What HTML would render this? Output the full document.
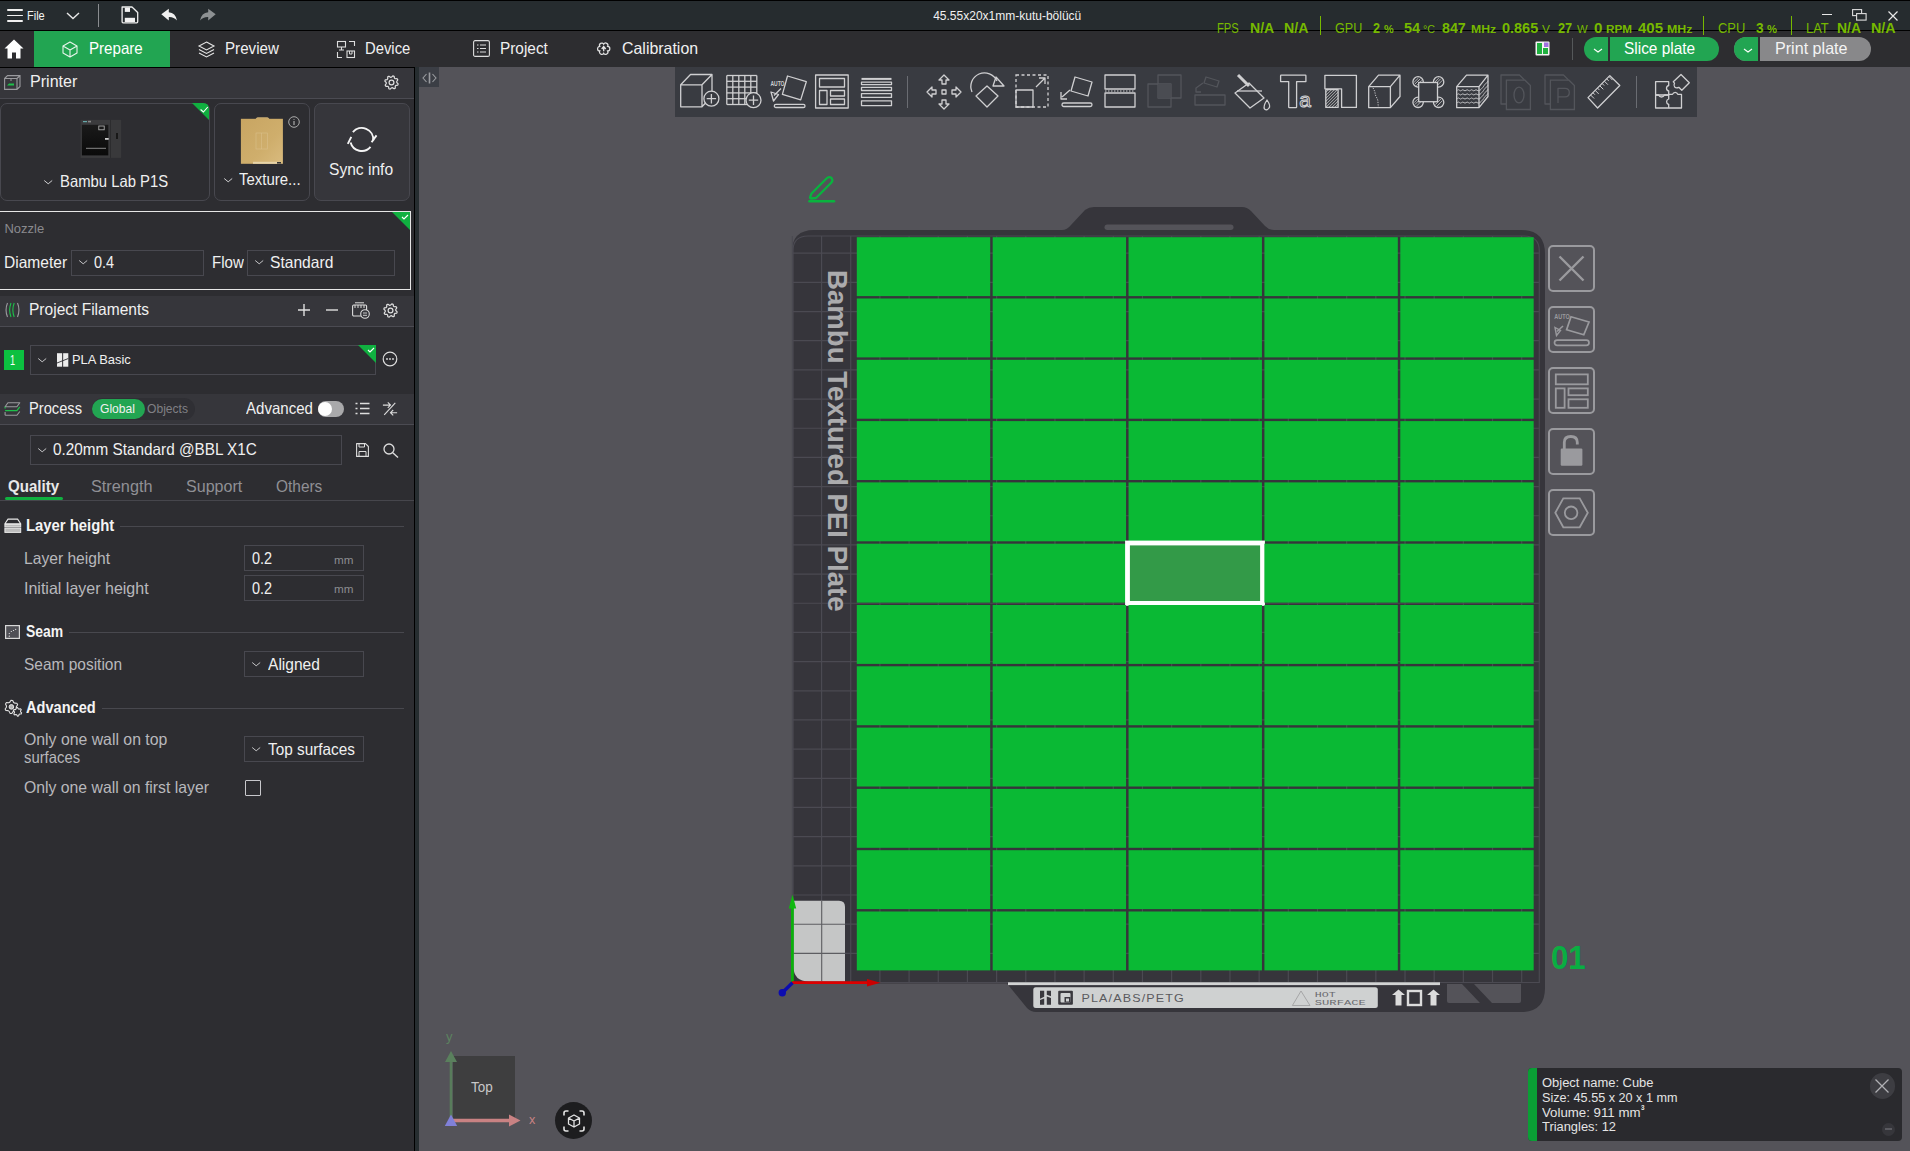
<!DOCTYPE html><html><head><meta charset="utf-8"><style>
html,body{margin:0;padding:0}
body{width:1910px;height:1151px;position:relative;overflow:hidden;background:#545359;font-family:"Liberation Sans",sans-serif}
.a{position:absolute}
.t{white-space:nowrap;transform-origin:0 0}
svg{overflow:visible}
</style></head><body>
<div class="a" style="left:0px;top:0px;width:1910px;height:1px;background:#000"></div>
<div class="a" style="left:0px;top:1px;width:1910px;height:29px;background:#262c2f"></div>
<div class="a" style="left:0px;top:30px;width:1910px;height:1px;background:#000"></div>
<div class="a" style="left:7px;top:9px;width:16px;height:1.6px;background:#f0f0f0;border-radius:1px"></div>
<div class="a" style="left:7px;top:14.5px;width:16px;height:1.6px;background:#f0f0f0;border-radius:1px"></div>
<div class="a" style="left:7px;top:20px;width:16px;height:1.6px;background:#f0f0f0;border-radius:1px"></div>
<div class="a t" style="left:26.70px;top:9.09px;font-size:13px;line-height:13px;color:#f4f4f4;font-weight:400;transform:scaleX(0.8457);">File</div>
<svg class="a" style="left:66px;top:12px;" width="14" height="8" viewBox="0 0 14 8"><path d="M1 1 L7 6.5 L13 1" stroke="#e8e8e8" stroke-width="1.4" fill="none"/></svg>
<div class="a" style="left:98px;top:4px;width:1.2px;height:23px;background:#8a8d90"></div>
<svg class="a" style="left:121px;top:6px;" width="18" height="18" viewBox="0 0 18 18"><path d="M1.1 1 H11 L16.7 6.5 V15.8 Q16.7 16.8 15.7 16.8 H2.1 Q1.1 16.8 1.1 15.8 Z" stroke="#eee" stroke-width="1.3" fill="none" stroke-linejoin="round"/><rect x="3.8" y="1.6" width="5.2" height="4.3" fill="#f2f2f2"/><rect x="3.8" y="11.8" width="10.2" height="4.2" fill="#f2f2f2"/></svg>
<svg class="a" style="left:160px;top:8px;" width="18" height="14" viewBox="0 0 18 14"><path d="M1.3 6.3 L8.8 0.8 V4.2 Q15.5 4.5 17 12.6 Q14 8.8 8.8 9 V12.4 Z" fill="#f0f0f0"/></svg>
<svg class="a" style="left:199px;top:8px;" width="18" height="14" viewBox="0 0 18 14"><path d="M16.7 6.3 L9.2 0.8 V4.2 Q2.5 4.5 1 12.6 Q4 8.8 9.2 9 V12.4 Z" fill="#8d9193"/></svg>
<div class="a t" style="left:933.20px;top:10.14px;font-size:12px;line-height:12px;color:#f0f0f0;font-weight:400;">45.55x20x1mm-kutu-bölücü</div>
<div class="a" style="left:1822px;top:14px;width:10px;height:1.2px;background:#e8e8e8"></div>
<svg class="a" style="left:1852px;top:9px;" width="16" height="12" viewBox="0 0 16 12"><rect x="0.6" y="0.6" width="9" height="6" stroke="#ddd" stroke-width="1.1" fill="none"/><rect x="4.6" y="4.6" width="9.5" height="6.5" stroke="#ddd" stroke-width="1.1" fill="#262c2f"/></svg>
<svg class="a" style="left:1888px;top:11px;" width="10" height="10" viewBox="0 0 10 10"><path d="M0.5 0.5 L9.5 9.5 M9.5 0.5 L0.5 9.5" stroke="#e8e8e8" stroke-width="1.2"/></svg>
<div class="a" style="left:0px;top:31px;width:1910px;height:36px;background:#2d2d30"></div>
<div class="a" style="left:0px;top:67px;width:415px;height:1px;background:#000"></div>
<svg class="a" style="left:4px;top:39px;" width="20" height="20" viewBox="0 0 20 20"><path d="M10 0.5 L19.5 9.5 H16.5 V19.5 H12 V13.5 H8 V19.5 H3.5 V9.5 H0.5 Z" fill="#fff"/></svg>
<div class="a" style="left:34px;top:31px;width:136px;height:36px;background:#22a552"></div>
<svg class="a" style="left:62px;top:41px;" width="16" height="16" viewBox="0 0 16 16"><path d="M8 1 L15 5 V12 L8 16 L1 12 V5 Z M1 5 L8 9 L15 5 M8 9 V16" stroke="#e8f5ec" stroke-width="1.1" fill="none" stroke-linejoin="round"/></svg>
<div class="a t" style="left:88.70px;top:39.73px;font-size:16.5px;line-height:16.5px;color:#fff;font-weight:400;transform:scaleX(0.9159);">Prepare</div>
<svg class="a" style="left:198px;top:41px;" width="17" height="17" viewBox="0 0 17 17"><path d="M8.5 1 L16 5 L8.5 9 L1 5 Z" stroke="#e6e6e6" stroke-width="1.1" fill="none"/><path d="M1 8.5 L8.5 12.5 L16 8.5 M1 12 L8.5 16 L16 12" stroke="#e6e6e6" stroke-width="1.1" fill="none"/></svg>
<div class="a t" style="left:224.80px;top:39.63px;font-size:16.5px;line-height:16.5px;color:#f0f0f0;font-weight:400;transform:scaleX(0.9176);">Preview</div>
<svg class="a" style="left:337px;top:41px;" width="18" height="17" viewBox="0 0 18 17"><rect x="0.5" y="0.5" width="8" height="5.5" stroke="#ddd" stroke-width="1.1" fill="none"/><path d="M4.5 6 V9 M2 9 H7" stroke="#ddd" stroke-width="1.1"/><path d="M12 0.5 H17.5 V5 M0.5 11 V16.5 H5" stroke="#ddd" stroke-width="1.1" fill="none"/><rect x="10" y="10" width="7.5" height="6.5" stroke="#ddd" stroke-width="1.1" fill="none"/><path d="M12.5 10 V13 H15 V10" stroke="#ddd" stroke-width="1" fill="none"/></svg>
<div class="a t" style="left:364.80px;top:39.63px;font-size:16.5px;line-height:16.5px;color:#f0f0f0;font-weight:400;transform:scaleX(0.8987);">Device</div>
<svg class="a" style="left:473px;top:40px;" width="17" height="17" viewBox="0 0 17 17"><rect x="0.6" y="0.6" width="15.8" height="15.8" rx="1.5" stroke="#ddd" stroke-width="1.1" fill="none"/><path d="M4 5h1.5M7 5h6M4 8.5h1.5M7 8.5h6M4 12h1.5M7 12h6" stroke="#ddd" stroke-width="1.1"/></svg>
<div class="a t" style="left:499.70px;top:39.63px;font-size:16.5px;line-height:16.5px;color:#f0f0f0;font-weight:400;transform:scaleX(0.9315);">Project</div>
<svg class="a" style="left:595.5px;top:41.3px;" width="15" height="15" viewBox="0 0 15 15"><path d="M7.70 3.20 A1.80 1.80 0 0 1 11.60 5.45 A1.80 1.80 0 0 1 11.60 9.95 A1.80 1.80 0 0 1 7.70 12.20 A1.80 1.80 0 0 1 3.80 9.95 A1.80 1.80 0 0 1 3.80 5.45 A1.80 1.80 0 0 1 7.70 3.20 Z" stroke="#e0e0e0" stroke-width="1.2" fill="none"/><path d="M7.7 10.3 V6.2 M5.7 8 L7.7 5.6 L9.7 8" stroke="#e8e8e8" stroke-width="1.3" fill="none"/></svg>
<div class="a t" style="left:621.60px;top:39.63px;font-size:16.5px;line-height:16.5px;color:#f0f0f0;font-weight:400;transform:scaleX(0.9649);">Calibration</div>
<svg class="a" style="left:1535px;top:41px;" width="15" height="15" viewBox="0 0 15 15"><rect x="0.5" y="0.5" width="14" height="14" rx="1" fill="#f4f4f4"/><rect x="2" y="2" width="5" height="11" fill="#20b040"/><rect x="8" y="7" width="5" height="6" fill="#20b040"/><rect x="9" y="1.5" width="4.5" height="4.5" fill="#a070e0"/></svg>
<div class="a" style="left:1572px;top:38px;width:1px;height:22px;background:#55585a"></div>
<div class="a" style="left:1584px;top:37px;width:135px;height:24px;background:#22a552;border-radius:12px"></div>
<div class="a" style="left:1608px;top:37px;width:2px;height:24px;background:#2d2d30"></div>
<svg class="a" style="left:1593px;top:47.5px;" width="10" height="5" viewBox="0 0 10 5"><path d="M1 1 L5 4 L9 1" stroke="#fff" stroke-width="1.1" fill="none"/></svg>
<div class="a t" style="left:1624.20px;top:40.13px;font-size:16.5px;line-height:16.5px;color:#fff;font-weight:400;transform:scaleX(0.9350);">Slice plate</div>
<div class="a" style="left:1734px;top:37px;width:137px;height:24px;background:#88888a;border-radius:12px"></div>
<div class="a" style="left:1734px;top:37px;width:24px;height:24px;background:#22a552;border-radius:12px 0 0 12px"></div>
<div class="a" style="left:1758px;top:37px;width:2px;height:24px;background:#2d2d30"></div>
<svg class="a" style="left:1743px;top:47.5px;" width="10" height="5" viewBox="0 0 10 5"><path d="M1 1 L5 4 L9 1" stroke="#fff" stroke-width="1.1" fill="none"/></svg>
<div class="a t" style="left:1774.60px;top:40.13px;font-size:16.5px;line-height:16.5px;color:#f4f4f4;font-weight:400;transform:scaleX(0.9767);">Print plate</div>
<div class="a" style="left:0px;top:68px;width:415px;height:1083px;background:#2d2d31"></div>
<div class="a" style="left:414px;top:68px;width:1px;height:1083px;background:#000"></div>
<div class="a" style="left:415px;top:67px;width:4px;height:1084px;background:#262d30"></div>
<div class="a" style="left:0px;top:68px;width:414px;height:30px;background:#36363b"></div>
<div class="a" style="left:0px;top:98px;width:414px;height:1px;background:#4b4b52"></div>
<svg class="a" style="left:4px;top:75px;" width="17" height="15" viewBox="0 0 17 15"><path d="M0.6 3.5 L3.5 0.6 H16 V11.5 L13 14.4 H0.6 Z M0.6 3.5 H13 V14.4 M13 3.5 L16 0.6" stroke="#9a9a9e" stroke-width="1.1" fill="none"/><path d="M7 3.5 V6" stroke="#9a9a9e" stroke-width="1"/><path d="M3 10.5 L5 8.5 H10 V10.5 Z" fill="#1ec04a"/></svg>
<div class="a t" style="left:29.80px;top:72.53px;font-size:16.5px;line-height:16.5px;color:#f0f0f0;font-weight:400;transform:scaleX(0.9734);">Printer</div>
<svg class="a" style="left:384px;top:75px;" width="15" height="15" viewBox="0 0 15 15"><path d="M12.80 7.50 L14.17 8.83 L13.78 10.10 L11.91 10.45 L11.25 11.25 L11.28 13.15 L10.10 13.78 L8.53 12.70 L7.50 12.80 L6.17 14.17 L4.90 13.78 L4.55 11.91 L3.75 11.25 L1.85 11.28 L1.22 10.10 L2.30 8.53 L2.20 7.50 L0.83 6.17 L1.22 4.90 L3.09 4.55 L3.75 3.75 L3.72 1.85 L4.90 1.22 L6.47 2.30 L7.50 2.20 L8.83 0.83 L10.10 1.22 L10.45 3.09 L11.25 3.75 L13.15 3.72 L13.78 4.90 L12.70 6.47 Z" stroke="#e0e0e0" stroke-width="1.2" fill="none" stroke-linejoin="round"/><circle cx="7.5" cy="7.5" r="2.40" stroke="#e0e0e0" stroke-width="1.2" fill="none"/></svg>
<div class="a" style="left:0px;top:103px;width:210px;height:98px;border:1px solid #48484f;border-radius:7px;box-sizing:border-box;background:#2d2d31"></div>
<svg class="a" style="left:192px;top:103px;" width="18" height="18" viewBox="0 0 18 18"><path d="M0 0 H11 Q17 0 17 6 V17 Z" fill="#10b040"/><path d="M8.6 6.5 L11.4 9 L15.8 4" stroke="#fff" stroke-width="1.1" fill="none"/></svg>
<svg class="a" style="left:80px;top:119px;" width="42" height="40" viewBox="0 0 42 40"><defs><linearGradient id="pw" x1="0" y1="0" x2="0" y2="1"><stop offset="0" stop-color="#1a1a1a"/><stop offset="1" stop-color="#0a0a0a"/></linearGradient></defs><rect x="0.6" y="0.9" width="29.4" height="38" fill="#3b3b3d"/><rect x="30" y="0.9" width="11.1" height="38" fill="#39393b"/><rect x="30" y="0.9" width="0.8" height="38" fill="#2a2a2c"/><rect x="1.9" y="5.8" width="26.4" height="30.6" fill="url(#pw)"/><rect x="18.8" y="7" width="5.4" height="3.8" fill="none" stroke="#bbb" stroke-width="0.8"/><rect x="6" y="28.8" width="20" height="1" fill="#888"/><rect x="25" y="19" width="3.7" height="1.8" fill="#ccc"/><rect x="36.2" y="14" width="1.6" height="6" fill="#111"/><rect x="3" y="2" width="4" height="1.2" fill="#6aa"/><rect x="8" y="1.8" width="3" height="1.6" fill="#888"/></svg>
<svg class="a" style="left:43px;top:179px;" width="11" height="7" viewBox="0 0 11 7"><path d="M1.2 1.5 L5.2 4.8 L9.2 1.5" stroke="#d0d0d2" stroke-width="1" fill="none"/></svg>
<div class="a t" style="left:59.50px;top:172.93px;font-size:16.5px;line-height:16.5px;color:#f0f0f0;font-weight:400;transform:scaleX(0.8993);">Bambu Lab P1S</div>
<div class="a" style="left:214px;top:103px;width:96px;height:98px;border:1px solid #48484f;border-radius:7px;box-sizing:border-box;background:#2d2d31"></div>
<svg class="a" style="left:240px;top:117px;" width="44" height="48" viewBox="0 0 44 48"><defs><linearGradient id="gt" x1="0" y1="0" x2="1" y2="1"><stop offset="0" stop-color="#c8a562"/><stop offset="0.6" stop-color="#cfae6c"/><stop offset="1" stop-color="#d9bb7e"/></linearGradient></defs><path d="M16 2 Q16.5 0.6 18 0.6 H27 Q28.5 0.6 29 2 Z" fill="#c4a262" stroke="#d8bd85" stroke-width="0.5"/><rect x="0.9" y="1.8" width="42" height="45" fill="url(#gt)"/><rect x="16" y="16" width="11.5" height="16" stroke="#dcc290" stroke-width="0.5" fill="none"/><path d="M21.5 16 V32" stroke="#dcc290" stroke-width="0.5"/><rect x="13" y="44.8" width="28" height="2" fill="#e6d3a8"/><rect x="37" y="45" width="4" height="1.6" fill="#333"/></svg>
<svg class="a" style="left:288px;top:116px;" width="12" height="12" viewBox="0 0 12 12"><circle cx="6" cy="6" r="5.3" stroke="#aaa" stroke-width="1" fill="none"/><path d="M6 5 V9 M6 3 V3.8" stroke="#aaa" stroke-width="1.2"/></svg>
<svg class="a" style="left:223px;top:177px;" width="11" height="7" viewBox="0 0 11 7"><path d="M1.2 1.5 L5.2 4.8 L9.2 1.5" stroke="#d0d0d2" stroke-width="1" fill="none"/></svg>
<div class="a t" style="left:239.20px;top:171.23px;font-size:16.5px;line-height:16.5px;color:#f0f0f0;font-weight:400;transform:scaleX(0.9072);">Texture...</div>
<div class="a" style="left:314px;top:103px;width:96px;height:98px;border:1px solid #48484f;border-radius:7px;box-sizing:border-box;background:#36363b"></div>
<svg class="a" style="left:344px;top:124px;" width="36" height="34" viewBox="0 0 36 34"><g stroke="#f4f4f4" stroke-width="1.9" fill="none" stroke-linecap="butt"><path d="M8.9 8.1 A11.5 11.5 0 0 1 29.2 16.5"/><path d="M32.5 11.4 L27.6 18.3"/><path d="M26.5 22.9 A11.5 11.5 0 0 1 6.6 18.5"/><path d="M7.3 12.9 L3.8 19.9"/></g></svg>
<div class="a t" style="left:328.90px;top:161.13px;font-size:16.5px;line-height:16.5px;color:#f0f0f0;font-weight:400;transform:scaleX(0.9441);">Sync info</div>
<div class="a" style="left:0px;top:211px;width:411px;height:79px;border:1px solid #e6e6e6;border-left:none;box-sizing:border-box"></div>
<svg class="a" style="left:392px;top:212px;" width="18" height="18" viewBox="0 0 18 18"><path d="M0 0 H18 V18 Z" fill="#10b040"/><path d="M10 5 L12 7 L16 3" stroke="#fff" stroke-width="1.1" fill="none"/></svg>
<div class="a t" style="left:4.40px;top:222.39px;font-size:13px;line-height:13px;color:#8a8a8e;font-weight:400;">Nozzle</div>
<div class="a t" style="left:4.40px;top:253.53px;font-size:16.5px;line-height:16.5px;color:#f0f0f0;font-weight:400;transform:scaleX(0.9431);">Diameter</div>
<div class="a" style="left:71px;top:250px;width:133px;height:26px;border:1px solid #48484f;box-sizing:border-box"></div>
<svg class="a" style="left:78px;top:259px;" width="11" height="7" viewBox="0 0 11 7"><path d="M1.2 1.5 L5.2 4.8 L9.2 1.5" stroke="#c4c4c6" stroke-width="1" fill="none"/></svg>
<div class="a t" style="left:94.40px;top:253.53px;font-size:16.5px;line-height:16.5px;color:#f0f0f0;font-weight:400;transform:scaleX(0.8764);">0.4</div>
<div class="a t" style="left:211.70px;top:253.53px;font-size:16.5px;line-height:16.5px;color:#f0f0f0;font-weight:400;transform:scaleX(0.9112);">Flow</div>
<div class="a" style="left:247px;top:250px;width:148px;height:26px;border:1px solid #48484f;box-sizing:border-box"></div>
<svg class="a" style="left:254px;top:259px;" width="11" height="7" viewBox="0 0 11 7"><path d="M1.2 1.5 L5.2 4.8 L9.2 1.5" stroke="#c4c4c6" stroke-width="1" fill="none"/></svg>
<div class="a t" style="left:270.40px;top:253.53px;font-size:16.5px;line-height:16.5px;color:#f0f0f0;font-weight:400;transform:scaleX(0.9464);">Standard</div>
<div class="a" style="left:0px;top:296px;width:414px;height:30px;background:#36363b"></div>
<div class="a" style="left:0px;top:326px;width:414px;height:1px;background:#4b4b52"></div>
<svg class="a" style="left:4px;top:302px;" width="17" height="16" viewBox="0 0 17 16"><path d="M3.5 1 Q0.6 8 3.5 15" stroke="#9a9a9e" stroke-width="1.1" fill="none"/><path d="M7 1 Q4.3 8 7 15 M10.2 1 Q7.5 8 10.2 15" stroke="#1ec04a" stroke-width="1.1" fill="none"/><path d="M13.5 1 Q16.4 8 13.5 15" stroke="#9a9a9e" stroke-width="1.1" fill="none"/></svg>
<div class="a t" style="left:29.20px;top:301.03px;font-size:16.5px;line-height:16.5px;color:#f0f0f0;font-weight:400;transform:scaleX(0.9415);">Project Filaments</div>
<svg class="a" style="left:297px;top:303px;" width="14" height="14" viewBox="0 0 14 14"><path d="M7 1 V13 M1 7 H13" stroke="#e0e0e0" stroke-width="1.4"/></svg>
<svg class="a" style="left:325px;top:303px;" width="14" height="14" viewBox="0 0 14 14"><path d="M1 7 H13" stroke="#e0e0e0" stroke-width="1.4"/></svg>
<svg class="a" style="left:352px;top:302px;" width="18" height="17" viewBox="0 0 18 17"><rect x="0.6" y="3" width="14" height="11" rx="1.2" stroke="#ddd" stroke-width="1.1" fill="none"/><path d="M3 0.8 H12 M3 3 V6 M6 3 V6 M9 3 V6 M12 3 V6" stroke="#ddd" stroke-width="1"/><circle cx="13" cy="12" r="4.3" fill="#36363b" stroke="#ddd" stroke-width="1.1"/><path d="M11 11 H15 M11 13.3 H15" stroke="#ddd" stroke-width="0.9"/></svg>
<svg class="a" style="left:383px;top:303px;" width="15" height="15" viewBox="0 0 15 15"><path d="M12.80 7.50 L14.17 8.83 L13.78 10.10 L11.91 10.45 L11.25 11.25 L11.28 13.15 L10.10 13.78 L8.53 12.70 L7.50 12.80 L6.17 14.17 L4.90 13.78 L4.55 11.91 L3.75 11.25 L1.85 11.28 L1.22 10.10 L2.30 8.53 L2.20 7.50 L0.83 6.17 L1.22 4.90 L3.09 4.55 L3.75 3.75 L3.72 1.85 L4.90 1.22 L6.47 2.30 L7.50 2.20 L8.83 0.83 L10.10 1.22 L10.45 3.09 L11.25 3.75 L13.15 3.72 L13.78 4.90 L12.70 6.47 Z" stroke="#e0e0e0" stroke-width="1.2" fill="none" stroke-linejoin="round"/><circle cx="7.5" cy="7.5" r="2.40" stroke="#e0e0e0" stroke-width="1.2" fill="none"/></svg>
<div class="a" style="left:4px;top:350px;width:20px;height:20px;background:#0cc040"></div>
<div class="a t" style="left:9.90px;top:351.70px;font-size:15px;line-height:15px;color:#fff;font-weight:400;transform:scaleX(0.6126);">1</div>
<div class="a" style="left:30px;top:345px;width:346px;height:30px;border:1px solid #48484f;box-sizing:border-box"></div>
<svg class="a" style="left:37px;top:357px;" width="11" height="7" viewBox="0 0 11 7"><path d="M1.2 1.5 L5.2 4.8 L9.2 1.5" stroke="#c4c4c6" stroke-width="1" fill="none"/></svg>
<svg class="a" style="left:57px;top:353px;" width="12" height="14" viewBox="0 0 12 14"><rect x="0" y="0.2" width="11.3" height="13.5" fill="#ececec"/><path d="M5.65 0 V14" stroke="#2d2d31" stroke-width="1"/><path d="M0 10 L11.3 5.5" stroke="#2d2d31" stroke-width="0.9"/></svg>
<div class="a t" style="left:72.20px;top:353.37px;font-size:13.5px;line-height:13.5px;color:#f0f0f0;font-weight:400;transform:scaleX(0.9535);">PLA Basic</div>
<svg class="a" style="left:358px;top:345px;" width="18" height="18" viewBox="0 0 18 18"><path d="M0 0 H18 V18 Z" fill="#10b040"/><path d="M10 5 L12 7 L16 3" stroke="#fff" stroke-width="1.1" fill="none"/></svg>
<svg class="a" style="left:382px;top:351px;" width="16" height="16" viewBox="0 0 16 16"><circle cx="8" cy="8" r="6.8" stroke="#ddd" stroke-width="1.2" fill="none"/><circle cx="5" cy="8" r="0.9" fill="#ddd"/><circle cx="8" cy="8" r="0.9" fill="#ddd"/><circle cx="11" cy="8" r="0.9" fill="#ddd"/></svg>
<div class="a" style="left:0px;top:394px;width:414px;height:30px;background:#36363b"></div>
<div class="a" style="left:0px;top:424px;width:414px;height:1px;background:#4b4b52"></div>
<svg class="a" style="left:4px;top:401px;" width="18" height="16" viewBox="0 0 18 16"><path d="M1.1 5.8 L3.9 1.8 H15.8 L12.9 5.8 Z" stroke="#9a9a9e" stroke-width="1.1" fill="none" stroke-linejoin="round"/><path d="M1.1 5.8 V7.5 M1.1 9.7 H12.9 L15.8 5.8" stroke="#1ec04a" stroke-width="1.2" fill="none"/><path d="M1.1 14.3 H12.9 L15.8 10.5 M1.1 11 V14.3" stroke="#9a9a9e" stroke-width="1.1" fill="none"/></svg>
<div class="a t" style="left:29.20px;top:399.53px;font-size:16.5px;line-height:16.5px;color:#f0f0f0;font-weight:400;transform:scaleX(0.8898);">Process</div>
<div class="a" style="left:92px;top:398px;width:103px;height:22px;background:#2f2f34;border-radius:11px"></div>
<div class="a" style="left:92px;top:399px;width:53px;height:20px;background:#22a552;border-radius:10px"></div>
<div class="a t" style="left:100.40px;top:402.37px;font-size:13.5px;line-height:13.5px;color:#f0f0f0;font-weight:400;transform:scaleX(0.8945);">Global</div>
<div class="a t" style="left:146.50px;top:402.37px;font-size:13.5px;line-height:13.5px;color:#808085;font-weight:400;transform:scaleX(0.8959);">Objects</div>
<div class="a t" style="left:246.40px;top:399.53px;font-size:16.5px;line-height:16.5px;color:#f0f0f0;font-weight:400;transform:scaleX(0.9125);">Advanced</div>
<div class="a" style="left:317.5px;top:401px;width:26.5px;height:15.7px;background:#a9a9ab;border-radius:8px"></div>
<div class="a" style="left:317.6px;top:401.7px;width:14.3px;height:14.3px;background:#fdfdfd;border-radius:50%"></div>
<svg class="a" style="left:355px;top:402px;" width="15" height="13" viewBox="0 0 15 13"><path d="M0.5 1.5 H2.5 M0.5 6.5 H2.5 M0.5 11.5 H2.5 M5 1.5 H14.5 M5 6.5 H14.5 M5 11.5 H14.5" stroke="#ddd" stroke-width="1.3"/></svg>
<svg class="a" style="left:382px;top:401px;" width="17" height="16" viewBox="0 0 17 16"><g stroke="#dcdcdc" stroke-width="1.1" fill="none"><path d="M13.3 1.9 L2.2 13.9"/><path d="M0.9 4.1 H8.5 M5.8 1.4 L8.5 4.1 L5.8 6.8"/><path d="M15.1 11.7 H8.5 M11.2 9 L8.5 11.7 L11.2 14.4"/></g></svg>
<div class="a" style="left:30px;top:435px;width:312px;height:30px;border:1px solid #48484f;box-sizing:border-box"></div>
<svg class="a" style="left:37px;top:447px;" width="11" height="7" viewBox="0 0 11 7"><path d="M1.2 1.5 L5.2 4.8 L9.2 1.5" stroke="#c4c4c6" stroke-width="1" fill="none"/></svg>
<div class="a t" style="left:53.40px;top:441.23px;font-size:16.5px;line-height:16.5px;color:#f0f0f0;font-weight:400;transform:scaleX(0.9277);">0.20mm Standard @BBL X1C</div>
<svg class="a" style="left:356px;top:443px;" width="13" height="14" viewBox="0 0 13 14"><path d="M0.6 0.6 H9.5 L12.4 3.5 V13.4 H0.6 Z" stroke="#ddd" stroke-width="1.1" fill="none" stroke-linejoin="round"/><path d="M3 0.6 V4 H8.5 V0.6 M3 13.4 V8.5 H10 V13.4" stroke="#ddd" stroke-width="1" fill="none"/></svg>
<svg class="a" style="left:383px;top:443px;" width="16" height="15" viewBox="0 0 16 15"><circle cx="6" cy="6" r="5" stroke="#ddd" stroke-width="1.3" fill="none"/><path d="M9.8 9.8 L15 14.5" stroke="#ddd" stroke-width="1.4"/></svg>
<div class="a t" style="left:7.50px;top:477.73px;font-size:16.5px;line-height:16.5px;color:#e8e8e8;font-weight:700;transform:scaleX(0.9153);">Quality</div>
<div class="a t" style="left:91.00px;top:477.73px;font-size:16.5px;line-height:16.5px;color:#909095;font-weight:400;transform:scaleX(0.9861);">Strength</div>
<div class="a t" style="left:186.20px;top:477.73px;font-size:16.5px;line-height:16.5px;color:#909095;font-weight:400;transform:scaleX(0.9735);">Support</div>
<div class="a t" style="left:276.20px;top:477.73px;font-size:16.5px;line-height:16.5px;color:#909095;font-weight:400;transform:scaleX(0.9354);">Others</div>
<div class="a" style="left:0px;top:500px;width:414px;height:1px;background:#46464c"></div>
<div class="a" style="left:5px;top:497px;width:58px;height:3px;background:#10b040;border-radius:1.5px"></div>
<svg class="a" style="left:4px;top:518px;" width="18" height="16" viewBox="0 0 18 16"><path d="M4 1.1 H13.6 L16.7 5.7 H0.9 Z" stroke="#e8e8e8" stroke-width="1.1" fill="none" stroke-linejoin="round"/><rect x="0.9" y="6.4" width="15.8" height="2.6" stroke="#e8e8e8" stroke-width="1" fill="#bdbdbd"/><rect x="0.9" y="10.3" width="15.8" height="4.1" stroke="#e8e8e8" stroke-width="1" fill="#bdbdbd"/></svg>
<div class="a t" style="left:25.60px;top:517.33px;font-size:16.5px;line-height:16.5px;color:#f4f4f4;font-weight:700;transform:scaleX(0.9002);">Layer height</div>
<div class="a" style="left:120px;top:526px;width:284px;height:1px;background:#48484e"></div>
<div class="a t" style="left:23.60px;top:549.73px;font-size:16.5px;line-height:16.5px;color:#b8b8bc;font-weight:400;transform:scaleX(0.9468);">Layer height</div>
<div class="a" style="left:244px;top:545px;width:120px;height:26px;border:1px solid #48484f;box-sizing:border-box"></div>
<div class="a t" style="left:251.50px;top:549.73px;font-size:16.5px;line-height:16.5px;color:#f0f0f0;font-weight:400;transform:scaleX(0.8764);">0.2</div>
<div class="a t" style="left:333.80px;top:554.69px;font-size:11px;line-height:11px;color:#8c8c90;font-weight:400;transform:scaleX(1.0592);">mm</div>
<div class="a t" style="left:23.60px;top:579.53px;font-size:16.5px;line-height:16.5px;color:#b8b8bc;font-weight:400;transform:scaleX(0.9706);">Initial layer height</div>
<div class="a" style="left:244px;top:575px;width:120px;height:26px;border:1px solid #48484f;box-sizing:border-box"></div>
<div class="a t" style="left:251.50px;top:579.53px;font-size:16.5px;line-height:16.5px;color:#f0f0f0;font-weight:400;transform:scaleX(0.8764);">0.2</div>
<div class="a t" style="left:333.80px;top:584.49px;font-size:11px;line-height:11px;color:#8c8c90;font-weight:400;transform:scaleX(1.0592);">mm</div>
<svg class="a" style="left:5px;top:625px;" width="15" height="14" viewBox="0 0 15 14"><rect x="0.6" y="0.6" width="13.8" height="12.8" stroke="#d8d8d8" stroke-width="1.2" fill="#505056"/><circle cx="4.3" cy="11.2" r="0.6" fill="#eee"/><circle cx="4.3" cy="8.5" r="0.6" fill="#eee"/><circle cx="6.3" cy="6.5" r="0.6" fill="#eee"/><circle cx="8.5" cy="5.5" r="0.6" fill="#eee"/><circle cx="10.7" cy="4.3" r="0.6" fill="#eee"/></svg>
<div class="a t" style="left:25.60px;top:623.33px;font-size:16.5px;line-height:16.5px;color:#f4f4f4;font-weight:700;transform:scaleX(0.8444);">Seam</div>
<div class="a" style="left:69px;top:632px;width:335px;height:1px;background:#48484e"></div>
<div class="a t" style="left:23.60px;top:655.53px;font-size:16.5px;line-height:16.5px;color:#b8b8bc;font-weight:400;transform:scaleX(0.9376);">Seam position</div>
<div class="a" style="left:244px;top:651px;width:120px;height:26px;border:1px solid #48484f;box-sizing:border-box"></div>
<svg class="a" style="left:251px;top:661px;" width="11" height="7" viewBox="0 0 11 7"><path d="M1.2 1.5 L5.2 4.8 L9.2 1.5" stroke="#c4c4c6" stroke-width="1" fill="none"/></svg>
<div class="a t" style="left:267.80px;top:655.53px;font-size:16.5px;line-height:16.5px;color:#f0f0f0;font-weight:400;transform:scaleX(0.9432);">Aligned</div>
<svg class="a" style="left:4px;top:700px;" width="19" height="18" viewBox="0 0 19 18"><path d="M12.30 7.89 L13.31 9.84 L12.35 11.27 L10.16 11.07 L8.99 11.64 L7.81 13.49 L6.09 13.37 L5.17 11.38 L4.09 10.65 L1.90 10.55 L1.14 9.00 L2.41 7.21 L2.50 5.91 L1.49 3.96 L2.45 2.53 L4.64 2.73 L5.81 2.16 L6.99 0.31 L8.71 0.43 L9.63 2.42 L10.71 3.15 L12.90 3.25 L13.66 4.80 L12.39 6.59 Z" stroke="#e0e0e0" stroke-width="1.1" fill="none" stroke-linejoin="round"/><circle cx="7.4" cy="6.9" r="2.3" stroke="#e6e6e6" stroke-width="1" fill="#b5b5b5"/><path d="M16.60 11.80 L17.65 12.91 L17.22 13.95 L15.69 13.99 L15.05 14.48 L14.61 15.95 L13.50 16.10 L12.70 14.79 L11.95 14.48 L10.46 14.84 L9.78 13.95 L10.51 12.60 L10.40 11.80 L9.35 10.69 L9.78 9.65 L11.31 9.61 L11.95 9.12 L12.39 7.65 L13.50 7.50 L14.30 8.81 L15.05 9.12 L16.54 8.76 L17.22 9.65 L16.49 11.00 Z" stroke="#e0e0e0" stroke-width="1.1" fill="#2d2d31" stroke-linejoin="round"/></svg>
<div class="a t" style="left:26.40px;top:698.73px;font-size:16.5px;line-height:16.5px;color:#f4f4f4;font-weight:700;transform:scaleX(0.8837);">Advanced</div>
<div class="a" style="left:102px;top:708px;width:302px;height:1px;background:#48484e"></div>
<div class="a t" style="left:23.60px;top:730.93px;font-size:16.5px;line-height:16.5px;color:#b8b8bc;font-weight:400;transform:scaleX(0.9586);">Only one wall on top</div>
<div class="a t" style="left:23.60px;top:748.73px;font-size:16.5px;line-height:16.5px;color:#b8b8bc;font-weight:400;transform:scaleX(0.8995);">surfaces</div>
<div class="a" style="left:244px;top:736px;width:120px;height:26px;border:1px solid #48484f;box-sizing:border-box"></div>
<svg class="a" style="left:251px;top:746px;" width="11" height="7" viewBox="0 0 11 7"><path d="M1.2 1.5 L5.2 4.8 L9.2 1.5" stroke="#c4c4c6" stroke-width="1" fill="none"/></svg>
<div class="a t" style="left:267.80px;top:740.73px;font-size:16.5px;line-height:16.5px;color:#f0f0f0;font-weight:400;transform:scaleX(0.9289);">Top surfaces</div>
<div class="a t" style="left:23.60px;top:778.73px;font-size:16.5px;line-height:16.5px;color:#b8b8bc;font-weight:400;transform:scaleX(0.9557);">Only one wall on first layer</div>
<div class="a" style="left:245px;top:780px;width:16px;height:16px;border:1.3px solid #c8c8cc;box-sizing:border-box;border-radius:1px"></div>
<div class="a" style="left:419px;top:67px;width:20px;height:20px;background:#3b3e45"></div>
<svg class="a" style="left:422px;top:72px;" width="15" height="12" viewBox="0 0 15 12"><path d="M4.5 2 L1 6 L4.5 10 M10.5 2 L14 6 L10.5 10" stroke="#9a9ca0" stroke-width="1.1" fill="none"/><path d="M7.5 0.5 V11.5" stroke="#9a9ca0" stroke-width="1.6"/></svg>
<div class="a" style="left:675px;top:67px;width:1022px;height:50px;background:#393b41"></div>
<svg class="a" style="left:680px;top:74px;" width="40" height="40" viewBox="0 0 40 40"><path d="M0.7 10.8 L10.5 0.5 H32 V22 L22 32.8 H0.7 Z M0.7 10.8 H22 V32.8 M22 10.8 L32 0.5" stroke="#cfcfd1" stroke-width="1.3" fill="none" stroke-linejoin="round"/><circle cx="31.4" cy="24.7" r="7.5" fill="#393b41" stroke="#cfcfd1" stroke-width="1.3" fill="none" stroke-linejoin="round"/><path d="M31.4 20 V29.4 M26.7 24.7 H36.1" stroke="#cfcfd1" stroke-width="1.3" fill="none" stroke-linejoin="round"/></svg>
<svg class="a" style="left:726px;top:74px;" width="40" height="40" viewBox="0 0 40 40"><path d="M0.8 1.5 V30.5" stroke="#cfcfd1" stroke-width="1.3" fill="none" stroke-linejoin="round"/><path d="M6.8 1.5 V30.5" stroke="#cfcfd1" stroke-width="1.3" fill="none" stroke-linejoin="round"/><path d="M12.8 1.5 V30.5" stroke="#cfcfd1" stroke-width="1.3" fill="none" stroke-linejoin="round"/><path d="M18.8 1.5 V30.5" stroke="#cfcfd1" stroke-width="1.3" fill="none" stroke-linejoin="round"/><path d="M24.8 1.5 V30.5" stroke="#cfcfd1" stroke-width="1.3" fill="none" stroke-linejoin="round"/><path d="M30.8 1.5 V30.5" stroke="#cfcfd1" stroke-width="1.3" fill="none" stroke-linejoin="round"/><path d="M0.8 1.5 H30.8" stroke="#cfcfd1" stroke-width="1.3" fill="none" stroke-linejoin="round"/><path d="M0.8 7.3 H30.8" stroke="#cfcfd1" stroke-width="1.3" fill="none" stroke-linejoin="round"/><path d="M0.8 13.1 H30.8" stroke="#cfcfd1" stroke-width="1.3" fill="none" stroke-linejoin="round"/><path d="M0.8 18.9 H30.8" stroke="#cfcfd1" stroke-width="1.3" fill="none" stroke-linejoin="round"/><path d="M0.8 24.7 H30.8" stroke="#cfcfd1" stroke-width="1.3" fill="none" stroke-linejoin="round"/><path d="M0.8 30.5 H30.8" stroke="#cfcfd1" stroke-width="1.3" fill="none" stroke-linejoin="round"/><circle cx="27.5" cy="26.2" r="7.5" fill="#393b41" stroke="#cfcfd1" stroke-width="1.3" fill="none" stroke-linejoin="round"/><path d="M27.5 21.5 V30.9 M22.8 26.2 H32.2" stroke="#cfcfd1" stroke-width="1.3" fill="none" stroke-linejoin="round"/></svg>
<svg class="a" style="left:770px;top:74px;" width="40" height="40" viewBox="0 0 40 40"><text x="0.5" y="12.3" font-size="6.5" font-weight="700" fill="#cfcfd1" font-family="Liberation Sans" textLength="14" lengthAdjust="spacingAndGlyphs">AUTO</text><path d="M17.5 2 L36.3 7.7 L30.7 25.9 L12.4 20.3 Z" stroke="#cfcfd1" stroke-width="1.3" fill="none" stroke-linejoin="round"/><path d="M11 14.5 L4 21.5" stroke="#cfcfd1" stroke-width="1.3" fill="none" stroke-linejoin="round"/><path d="M1 18 L3.5 27 L8.5 20.5 Z" stroke="#cfcfd1" stroke-width="1.3" fill="none" stroke-linejoin="round"/><rect x="4.3" y="30.3" width="30.7" height="3.2" rx="1.6" stroke="#cfcfd1" stroke-width="1.3" fill="none" stroke-linejoin="round"/></svg>
<svg class="a" style="left:815px;top:74px;" width="40" height="40" viewBox="0 0 40 40"><rect x="0.6" y="1" width="32.6" height="33" stroke="#cfcfd1" stroke-width="1.3" fill="none" stroke-linejoin="round"/><rect x="4.5" y="4.5" width="25" height="8.5" stroke="#cfcfd1" stroke-width="1.3" fill="none" stroke-linejoin="round"/><rect x="4.5" y="16.5" width="7.5" height="14" stroke="#cfcfd1" stroke-width="1.3" fill="none" stroke-linejoin="round"/><rect x="15.5" y="16.5" width="14" height="5.5" stroke="#cfcfd1" stroke-width="1.3" fill="none" stroke-linejoin="round"/><rect x="15.5" y="25" width="14" height="5.5" stroke="#cfcfd1" stroke-width="1.3" fill="none" stroke-linejoin="round"/></svg>
<svg class="a" style="left:861px;top:74px;" width="40" height="40" viewBox="0 0 40 40"><path d="M0.5 4.9 H30.5" stroke="#cfcfd1" stroke-width="2"/><rect x="0.5" y="8.1" width="30" height="2.5" stroke="#cfcfd1" stroke-width="1.3" fill="none" stroke-linejoin="round"/><rect x="0.5" y="13.4" width="30" height="3.1" stroke="#cfcfd1" stroke-width="1.3" fill="none" stroke-linejoin="round"/><rect x="0.5" y="19.6" width="30" height="3.8" stroke="#cfcfd1" stroke-width="1.3" fill="none" stroke-linejoin="round"/><rect x="0.5" y="26.8" width="30" height="4.8" stroke="#cfcfd1" stroke-width="1.3" fill="none" stroke-linejoin="round"/></svg>
<div class="a" style="left:907px;top:76px;width:1.4px;height:32px;background:#6a6c72"></div>
<svg class="a" style="left:926px;top:74px;" width="36" height="37" viewBox="0 0 36 37"><path d="M18 1 L13 6 H16 V10 H20 V6 H23 Z M18 35 L13 30 H16 V26 H20 V30 H23 Z M1 18 L6 13 V16 H10 V20 H6 V23 Z M35 18 L30 13 V16 H26 V20 H30 V23 Z" stroke="#cfcfd1" stroke-width="1.3" fill="none" stroke-linejoin="round"/><rect x="16" y="16" width="4" height="4" stroke="#cfcfd1" stroke-width="1.3" fill="none" stroke-linejoin="round"/></svg>
<svg class="a" style="left:970px;top:74px;" width="36" height="37" viewBox="0 0 36 37"><path d="M2 18 A13 13 0 0 1 27 7" stroke="#cfcfd1" stroke-width="1.3" fill="none" stroke-linejoin="round"/><path d="M26 3 L34 12 L23 12 Z" stroke="#cfcfd1" stroke-width="1.3" fill="none" stroke-linejoin="round"/><path d="M17 12 L28 22 L17 33 L6 22 Z" stroke="#cfcfd1" stroke-width="1.3" fill="none" stroke-linejoin="round"/></svg>
<svg class="a" style="left:1015px;top:74px;" width="34" height="37" viewBox="0 0 34 37"><rect x="1" y="1" width="32" height="32" stroke="#cfcfd1" stroke-width="1.3" fill="none" stroke-dasharray="3 2.5"/><rect x="1" y="16" width="17" height="17" stroke="#cfcfd1" stroke-width="1.3" fill="none" stroke-linejoin="round"/><path d="M21 13 L30 4 M24 4 H30 V10" stroke="#cfcfd1" stroke-width="1.3" fill="none" stroke-linejoin="round"/></svg>
<svg class="a" style="left:1058px;top:74px;" width="36" height="37" viewBox="0 0 36 37"><path d="M17 3 L34 8 L30 22 L13 17 Z" stroke="#cfcfd1" stroke-width="1.3" fill="none" stroke-linejoin="round"/><path d="M12 16 L4 23 M3 18 L3 25 L9 25" stroke="#cfcfd1" stroke-width="1.3" fill="none" stroke-linejoin="round"/><rect x="4" y="29" width="30" height="3.5" rx="1.75" stroke="#cfcfd1" stroke-width="1.3" fill="none" stroke-linejoin="round"/></svg>
<svg class="a" style="left:1104px;top:74px;" width="32" height="37" viewBox="0 0 32 37"><rect x="1" y="1" width="30" height="14" stroke="#cfcfd1" stroke-width="1.3" fill="none" stroke-linejoin="round"/><rect x="1" y="19" width="30" height="14" stroke="#cfcfd1" stroke-width="1.3" fill="none" stroke-linejoin="round"/><path d="M1 17 H31" stroke="#cfcfd1" stroke-width="1" stroke-dasharray="1.5 1.5"/></svg>
<svg class="a" style="left:1147px;top:74px;" width="35" height="37" viewBox="0 0 35 37"><rect x="1" y="10" width="23" height="23" stroke="#53555b" stroke-width="1.3" fill="none" stroke-linejoin="round"/><rect x="11" y="1" width="23" height="23" stroke="#53555b" stroke-width="1.3" fill="none" stroke-linejoin="round"/><rect x="11" y="10" width="13" height="14" fill="#4a4c52"/></svg>
<svg class="a" style="left:1193px;top:74px;" width="33" height="37" viewBox="0 0 33 37"><path d="M13 3 L26 7 L24 13 L11 9 Z" stroke="#53555b" stroke-width="1.3" fill="none" stroke-linejoin="round"/><path d="M10 9 L3 14 V18 H8" stroke="#53555b" stroke-width="1.3" fill="none" stroke-linejoin="round"/><rect x="2" y="21" width="30" height="10" stroke="#53555b" stroke-width="1.3" fill="none" stroke-linejoin="round"/></svg>
<svg class="a" style="left:1234px;top:74px;" width="38" height="37" viewBox="0 0 38 37"><path d="M15 9 L30 24 L16 34 L1 19 Z" stroke="#cfcfd1" stroke-width="1.3" fill="none" stroke-linejoin="round"/><path d="M3 17 H28" stroke="#cfcfd1" stroke-width="1.3" fill="none" stroke-linejoin="round"/><path d="M4 1 L15 12" stroke="#cfcfd1" stroke-width="3" /><path d="M33 26 Q37 32 35 34 Q33 37 30.5 35 Q29 32 33 26 Z" stroke="#cfcfd1" stroke-width="1.3" fill="none" stroke-linejoin="round"/></svg>
<svg class="a" style="left:1280px;top:74px;" width="40" height="40" viewBox="0 0 40 40"><path d="M0.6 1.8 Q0.6 1.2 1.2 1.2 H25.3 Q25.9 1.2 25.9 1.8 V7.6 H16.6 V33 Q16.6 33.6 16 33.6 H9.3 Q8.7 33.6 8.7 33 V7.6 H0.6 Z" stroke="#cfcfd1" stroke-width="1.3" fill="none" stroke-linejoin="round"/><text x="19.2" y="33.4" font-size="21" fill="none" stroke="#cfcfd1" stroke-width="1" font-family="Liberation Sans">a</text></svg>
<svg class="a" style="left:1324px;top:74px;" width="40" height="40" viewBox="0 0 40 40"><path d="M0.9 1.3 H32.4 V33.4 H17.6 V14.8 H0.9 Z" stroke="#cfcfd1" stroke-width="1.3" fill="none" stroke-linejoin="round"/><rect x="1.8" y="15.6" width="12.3" height="17.8" stroke="#cfcfd1" stroke-width="1.3" fill="none" stroke-linejoin="round"/><g clip-path="url(#vh)"><path d="M-16.2 33.4 L1.8 15.4" stroke="#cfcfd1" stroke-width="0.8"/><path d="M-13.2 33.4 L4.8 15.4" stroke="#cfcfd1" stroke-width="0.8"/><path d="M-10.2 33.4 L7.8 15.4" stroke="#cfcfd1" stroke-width="0.8"/><path d="M-7.2 33.4 L10.8 15.4" stroke="#cfcfd1" stroke-width="0.8"/><path d="M-4.2 33.4 L13.8 15.4" stroke="#cfcfd1" stroke-width="0.8"/><path d="M-1.2 33.4 L16.8 15.4" stroke="#cfcfd1" stroke-width="0.8"/><path d="M1.8 33.4 L19.8 15.4" stroke="#cfcfd1" stroke-width="0.8"/><path d="M4.8 33.4 L22.8 15.4" stroke="#cfcfd1" stroke-width="0.8"/><path d="M7.8 33.4 L25.8 15.4" stroke="#cfcfd1" stroke-width="0.8"/><path d="M10.8 33.4 L28.8 15.4" stroke="#cfcfd1" stroke-width="0.8"/><path d="M13.8 33.4 L31.8 15.4" stroke="#cfcfd1" stroke-width="0.8"/></g><clipPath id="vh"><rect x="1.8" y="15.6" width="12.3" height="17.8"/></clipPath></svg>
<svg class="a" style="left:1368px;top:74px;" width="40" height="40" viewBox="0 0 40 40"><path d="M0.7 12.7 L10.5 1.2 H32 V22.5 L22.4 33.7 H0.7 Z M0.7 12.7 H22.4 V33.7 M22.4 12.7 L32 1.2" stroke="#cfcfd1" stroke-width="1.3" fill="none" stroke-linejoin="round"/><path d="M5 13.8 L6.8 17.5 L7.4 21 L9.8 26 L10.3 33" stroke="#cfcfd1" stroke-width="0.9" stroke-dasharray="1.3 1.2" fill="none"/></svg>
<svg class="a" style="left:1412px;top:74px;" width="40" height="40" viewBox="0 0 40 40"><circle cx="6.1" cy="7.9" r="5.2" stroke="#cfcfd1" stroke-width="1.3" fill="none" stroke-linejoin="round"/><path d="M2.9 10.1 L8.3 4.7 M4.5 11.7 L9.9 6.3 M2.2 8.2 L6.4 4.0" stroke="#cfcfd1" stroke-width="0.8"/><circle cx="26.6" cy="7.9" r="5.2" stroke="#cfcfd1" stroke-width="1.3" fill="none" stroke-linejoin="round"/><path d="M23.4 10.1 L28.8 4.7 M25.0 11.7 L30.4 6.3 M22.7 8.2 L26.9 4.0" stroke="#cfcfd1" stroke-width="0.8"/><circle cx="6.1" cy="28.3" r="5.2" stroke="#cfcfd1" stroke-width="1.3" fill="none" stroke-linejoin="round"/><path d="M2.9 30.5 L8.3 25.1 M4.5 32.1 L9.9 26.7 M2.2 28.6 L6.4 24.4" stroke="#cfcfd1" stroke-width="0.8"/><circle cx="26.6" cy="28.3" r="5.2" stroke="#cfcfd1" stroke-width="1.3" fill="none" stroke-linejoin="round"/><path d="M23.4 30.5 L28.8 25.1 M25.0 32.1 L30.4 26.7 M22.7 28.6 L26.9 24.4" stroke="#cfcfd1" stroke-width="0.8"/><rect x="6.7" y="8.5" width="18.8" height="19.2" fill="#393b41" stroke="#cfcfd1" stroke-width="1.3"/></svg>
<svg class="a" style="left:1456px;top:74px;" width="40" height="40" viewBox="0 0 40 40"><path d="M0.7 12.7 L10.5 1.2 H32 V22.5 L23 33.7 H0.7 Z M0.7 12.7 H23 V33.7 M23 12.7 L32 1.2" stroke="#cfcfd1" stroke-width="1.3" fill="none" stroke-linejoin="round"/><path d="M1.3 16.3 q1.1 -1.1 2.2 0 t2.2 0 t2.2 0 t2.2 0 t2.2 0 t2.2 0 t2.2 0 t2.2 0 t2.2 0 t2.2 0" stroke="#cfcfd1" stroke-width="0.9" fill="none"/><path d="M1.3 20.4 q1.1 -1.1 2.2 0 t2.2 0 t2.2 0 t2.2 0 t2.2 0 t2.2 0 t2.2 0 t2.2 0 t2.2 0 t2.2 0" stroke="#cfcfd1" stroke-width="0.9" fill="none"/><path d="M1.3 24.5 q1.1 -1.1 2.2 0 t2.2 0 t2.2 0 t2.2 0 t2.2 0 t2.2 0 t2.2 0 t2.2 0 t2.2 0 t2.2 0" stroke="#cfcfd1" stroke-width="0.9" fill="none"/><path d="M1.3 28.6 q1.1 -1.1 2.2 0 t2.2 0 t2.2 0 t2.2 0 t2.2 0 t2.2 0 t2.2 0 t2.2 0 t2.2 0 t2.2 0" stroke="#cfcfd1" stroke-width="0.9" fill="none"/><path d="M23.6 17.0 q1.2 -2.3 2.1 -2.5 t2.1 -2.5 t2.1 -2.5 t2.1 -2.5" stroke="#cfcfd1" stroke-width="0.8" fill="none"/><path d="M23.6 21.1 q1.2 -2.3 2.1 -2.5 t2.1 -2.5 t2.1 -2.5 t2.1 -2.5" stroke="#cfcfd1" stroke-width="0.8" fill="none"/><path d="M23.6 25.2 q1.2 -2.3 2.1 -2.5 t2.1 -2.5 t2.1 -2.5 t2.1 -2.5" stroke="#cfcfd1" stroke-width="0.8" fill="none"/><path d="M23.6 29.3 q1.2 -2.3 2.1 -2.5 t2.1 -2.5 t2.1 -2.5 t2.1 -2.5" stroke="#cfcfd1" stroke-width="0.8" fill="none"/></svg>
<svg class="a" style="left:1500px;top:74px;" width="40" height="40" viewBox="0 0 40 40"><path d="M1 1 H19.5 L24 5.5 V30 H1 Z" stroke="#53555b" stroke-width="1.3" fill="none" stroke-linejoin="round"/><path d="M6.4 6.2 H25 L30.4 11.6 V35.5 H6.4 Z" stroke="#53555b" stroke-width="1.3" fill="#393b41"/><ellipse cx="19" cy="21" rx="5" ry="7.9" stroke="#53555b" stroke-width="1.3" fill="none" stroke-linejoin="round"/></svg>
<svg class="a" style="left:1544px;top:74px;" width="40" height="40" viewBox="0 0 40 40"><path d="M1 1 H19.5 L24 5.5 V30 H1 Z" stroke="#53555b" stroke-width="1.3" fill="none" stroke-linejoin="round"/><path d="M6.4 6.2 H25 L30.4 11.6 V35.5 H6.4 Z" stroke="#53555b" stroke-width="1.3" fill="#393b41"/><path d="M14 29 V14.3 H21 Q25.3 14.3 25.3 18.6 Q25.3 22.9 21 22.9 H14" stroke="#53555b" stroke-width="1.3" fill="none" stroke-linejoin="round"/></svg>
<svg class="a" style="left:1587px;top:74px;" width="40" height="40" viewBox="0 0 40 40"><path d="M1 23.6 L22.8 1.6 L32.8 11.5 L10.6 34 Z" stroke="#cfcfd1" stroke-width="1.3" fill="none" stroke-linejoin="round"/><path d="M3.6 21.0 L7.1 24.5" stroke="#cfcfd1" stroke-width="1"/><path d="M5.9 18.7 L7.9 20.7" stroke="#cfcfd1" stroke-width="1"/><path d="M8.2 16.4 L11.7 19.9" stroke="#cfcfd1" stroke-width="1"/><path d="M10.5 14.1 L12.5 16.1" stroke="#cfcfd1" stroke-width="1"/><path d="M12.8 11.8 L16.3 15.3" stroke="#cfcfd1" stroke-width="1"/><path d="M15.1 9.5 L17.1 11.5" stroke="#cfcfd1" stroke-width="1"/><path d="M17.4 7.2 L20.9 10.7" stroke="#cfcfd1" stroke-width="1"/><path d="M19.7 4.9 L21.7 6.9" stroke="#cfcfd1" stroke-width="1"/><path d="M22.0 2.6 L25.5 6.1" stroke="#cfcfd1" stroke-width="1"/></svg>
<div class="a" style="left:1636px;top:76px;width:1.4px;height:32px;background:#6a6c72"></div>
<svg class="a" style="left:1655px;top:74px;" width="40" height="40" viewBox="0 0 40 40"><path d="M0.6 7.7 H13.7 V11.5 Q11.5 12 11.5 14.3 Q11.5 16.5 13.7 17 V21 H0.6 Z" stroke="#cfcfd1" stroke-width="1.3" fill="none" stroke-linejoin="round"/><path d="M0.6 21 H3.5 Q4.5 23 6.5 23 Q8.5 23 9.5 21 H13.7 V25 Q11.6 25.7 11.6 27.8 Q11.6 30 13.7 30.5 V34 H0.6 Z" stroke="#cfcfd1" stroke-width="1.3" fill="none" stroke-linejoin="round"/><path d="M13.7 20.4 H17.5 Q18.2 18.3 20.2 18.3 Q22.2 18.3 22.8 20.4 H26.5 V34 H13.7" stroke="#cfcfd1" stroke-width="1.3" fill="none" stroke-linejoin="round"/><path d="M18.3 7.8 L26 0.5 L34.3 8.8 L26.8 16.3 L23.8 13.3 Q21.2 14.5 19.7 13 Q18.3 11.5 19.5 9.2 Z" stroke="#cfcfd1" stroke-width="1.3" fill="none" stroke-linejoin="round"/></svg>
<svg class="a" style="left:770px;top:195px;overflow:hidden" width="830" height="830" viewBox="0 0 830 830"><path d="M22.00 57.00 Q22.00 35.00 44.00 35.00 L292.00 35.00 Q297.00 35.00 301.00 30.00 L315.00 15.00 Q319.00 12.00 324.00 12.00 L472.00 12.00 Q477.00 12.00 481.00 16.00 L495.00 31.00 Q499.00 35.00 504.00 35.00 L751.00 35.00 Q775.00 35.00 775.00 59.00 L775.00 793.00 Q775.00 817.00 751.00 817.00 L266.00 817.00 Q261.00 817.00 257.00 813.00 L237.00 788.50 L22.00 788.50 Z" fill="#36353b"/><rect x="334.5" y="29.5" width="129" height="5.5" rx="2.75" fill="#545359"/><path d="M22.40 41.00 L22.40 787.50 M51.57 41.00 L51.57 787.50 M80.74 41.00 L80.74 787.50 M109.92 41.00 L109.92 787.50 M139.09 41.00 L139.09 787.50 M168.26 41.00 L168.26 787.50 M197.43 41.00 L197.43 787.50 M226.60 41.00 L226.60 787.50 M255.78 41.00 L255.78 787.50 M284.95 41.00 L284.95 787.50 M314.12 41.00 L314.12 787.50 M343.29 41.00 L343.29 787.50 M372.46 41.00 L372.46 787.50 M401.63 41.00 L401.63 787.50 M430.81 41.00 L430.81 787.50 M459.98 41.00 L459.98 787.50 M489.15 41.00 L489.15 787.50 M518.32 41.00 L518.32 787.50 M547.49 41.00 L547.49 787.50 M576.67 41.00 L576.67 787.50 M605.84 41.00 L605.84 787.50 M635.01 41.00 L635.01 787.50 M664.18 41.00 L664.18 787.50 M693.35 41.00 L693.35 787.50 M722.53 41.00 L722.53 787.50 M751.70 41.00 L751.70 787.50 M23.00 787.50 L769.20 787.50 M23.00 758.33 L769.20 758.33 M23.00 729.16 L769.20 729.16 M23.00 699.98 L769.20 699.98 M23.00 670.81 L769.20 670.81 M23.00 641.64 L769.20 641.64 M23.00 612.47 L769.20 612.47 M23.00 583.30 L769.20 583.30 M23.00 554.12 L769.20 554.12 M23.00 524.95 L769.20 524.95 M23.00 495.78 L769.20 495.78 M23.00 466.61 L769.20 466.61 M23.00 437.44 L769.20 437.44 M23.00 408.27 L769.20 408.27 M23.00 379.09 L769.20 379.09 M23.00 349.92 L769.20 349.92 M23.00 320.75 L769.20 320.75 M23.00 291.58 L769.20 291.58 M23.00 262.41 L769.20 262.41 M23.00 233.23 L769.20 233.23 M23.00 204.06 L769.20 204.06 M23.00 174.89 L769.20 174.89 M23.00 145.72 L769.20 145.72 M23.00 116.55 L769.20 116.55 M23.00 87.38 L769.20 87.38 M23.00 58.20 L769.20 58.20 " stroke="#4b4a52" stroke-width="1.2" fill="none"/><path d="M23.00 787.50 L23.00 56.00 Q23.00 41.00 38.00 41.00 L754.00 41.00 Q769.30 41.00 769.30 56.00 L769.30 787.50 Z" stroke="#4b4a52" stroke-width="1.2" fill="none"/><path d="M23.40 705.70 L69.00 705.70 Q75.00 705.70 75.00 711.70 L75.00 786.50 L39.00 786.50 Q23.40 786.50 23.40 771.00 Z" fill="#c5c6c6"/><path d="M51.70 705.70 L51.70 786.50 M23.40 729.20 L75.00 729.20 M23.40 758.40 L75.00 758.40" stroke="#5d5d61" stroke-width="1.1"/><rect x="238" y="787.3" width="432" height="2.8" fill="#d2d3d3"/><path d="M677.00 789.00 L692.00 789.00 L710.00 808.00 L679.00 808.00 Q677.00 808.00 677.00 806.00 Z" fill="#545359"/><path d="M704.00 789.00 L751.00 789.00 L751.00 806.00 Q751.00 808.00 749.00 808.00 L722.00 808.00 Z" fill="#545359"/><rect x="263.29999999999995" y="792.3" width="344.5" height="20.7" rx="2.5" fill="#cfd1d1"/><path d="M270.00 795.80 h4.2 v6 l-4.2 2 Z M270.00 805.00 l4.2 -1.5 v6.2 h-4.2 Z M276.80 795.80 h4.2 v5.5 l-4.2 -1.5 Z M276.80 801.50 l4.2 1.6 v6.6 h-4.2 Z" fill="#3a393e"/><rect x="288.20000000000005" y="795.8" width="14.7" height="13.9" rx="1" fill="#3a393e"/><rect x="290.5" y="798" width="10" height="9.5" rx="1" fill="#cfd1d1"/><rect x="294.5" y="802" width="6" height="5.5" fill="#3a393e"/><rect x="296" y="803.5" width="3" height="3" fill="#cfd1d1"/><text x="311.5" y="806.8" font-size="11" fill="#5a5a5e" font-family="Liberation Sans" textLength="103.5" lengthAdjust="spacingAndGlyphs" style="letter-spacing:1px">PLA/ABS/PETG</text><path d="M531.00 796.00 L540.00 810.50 L522.40 810.50 Z" stroke="#9a9a9c" stroke-width="0.8" fill="none"/><text x="544.8" y="802.3" font-size="7.5" fill="#6a6a6e" font-family="Liberation Mono" textLength="21" lengthAdjust="spacingAndGlyphs">HOT</text><text x="544.8" y="810.3" font-size="7.5" fill="#6a6a6e" font-family="Liberation Mono" textLength="51" lengthAdjust="spacingAndGlyphs">SURFACE</text><path d="M628.50 794.50 l-6.5 5.5 h3.5 v10.5 h6 v-10.5 h3.5 Z" fill="#dcdcdc"/><rect x="638" y="796" width="13" height="14" stroke="#dcdcdc" stroke-width="2.4" fill="none"/><path d="M663.50 794.50 l-6.5 5.5 h3.5 v10.5 h6 v-10.5 h3.5 Z" fill="#dcdcdc"/></svg>
<svg class="a" style="left:770px;top:195px;" width="830" height="830" viewBox="0 0 830 830"><rect x="86.80" y="42.20" width="133.40" height="58.90" fill="#0ab934"/><rect x="222.67" y="42.20" width="133.40" height="58.90" fill="#0ab934"/><rect x="358.54" y="42.20" width="133.40" height="58.90" fill="#0ab934"/><rect x="494.41" y="42.20" width="133.40" height="58.90" fill="#0ab934"/><rect x="630.28" y="42.20" width="133.40" height="58.90" fill="#0ab934"/><rect x="86.80" y="103.50" width="133.40" height="58.90" fill="#0ab934"/><rect x="222.67" y="103.50" width="133.40" height="58.90" fill="#0ab934"/><rect x="358.54" y="103.50" width="133.40" height="58.90" fill="#0ab934"/><rect x="494.41" y="103.50" width="133.40" height="58.90" fill="#0ab934"/><rect x="630.28" y="103.50" width="133.40" height="58.90" fill="#0ab934"/><rect x="86.80" y="164.80" width="133.40" height="58.90" fill="#0ab934"/><rect x="222.67" y="164.80" width="133.40" height="58.90" fill="#0ab934"/><rect x="358.54" y="164.80" width="133.40" height="58.90" fill="#0ab934"/><rect x="494.41" y="164.80" width="133.40" height="58.90" fill="#0ab934"/><rect x="630.28" y="164.80" width="133.40" height="58.90" fill="#0ab934"/><rect x="86.80" y="226.10" width="133.40" height="58.90" fill="#0ab934"/><rect x="222.67" y="226.10" width="133.40" height="58.90" fill="#0ab934"/><rect x="358.54" y="226.10" width="133.40" height="58.90" fill="#0ab934"/><rect x="494.41" y="226.10" width="133.40" height="58.90" fill="#0ab934"/><rect x="630.28" y="226.10" width="133.40" height="58.90" fill="#0ab934"/><rect x="86.80" y="287.40" width="133.40" height="58.90" fill="#0ab934"/><rect x="222.67" y="287.40" width="133.40" height="58.90" fill="#0ab934"/><rect x="358.54" y="287.40" width="133.40" height="58.90" fill="#0ab934"/><rect x="494.41" y="287.40" width="133.40" height="58.90" fill="#0ab934"/><rect x="630.28" y="287.40" width="133.40" height="58.90" fill="#0ab934"/><rect x="86.80" y="348.70" width="133.40" height="58.90" fill="#0ab934"/><rect x="222.67" y="348.70" width="133.40" height="58.90" fill="#0ab934"/><rect x="358.54" y="348.70" width="133.40" height="58.90" fill="#339a48"/><rect x="357.50" y="348.00" width="135" height="60.4" fill="none" stroke="#fff" stroke-width="4.8"/><rect x="494.41" y="348.70" width="133.40" height="58.90" fill="#0ab934"/><rect x="630.28" y="348.70" width="133.40" height="58.90" fill="#0ab934"/><rect x="86.80" y="410.00" width="133.40" height="58.90" fill="#0ab934"/><rect x="222.67" y="410.00" width="133.40" height="58.90" fill="#0ab934"/><rect x="358.54" y="410.00" width="133.40" height="58.90" fill="#0ab934"/><rect x="494.41" y="410.00" width="133.40" height="58.90" fill="#0ab934"/><rect x="630.28" y="410.00" width="133.40" height="58.90" fill="#0ab934"/><rect x="86.80" y="471.30" width="133.40" height="58.90" fill="#0ab934"/><rect x="222.67" y="471.30" width="133.40" height="58.90" fill="#0ab934"/><rect x="358.54" y="471.30" width="133.40" height="58.90" fill="#0ab934"/><rect x="494.41" y="471.30" width="133.40" height="58.90" fill="#0ab934"/><rect x="630.28" y="471.30" width="133.40" height="58.90" fill="#0ab934"/><rect x="86.80" y="532.60" width="133.40" height="58.90" fill="#0ab934"/><rect x="222.67" y="532.60" width="133.40" height="58.90" fill="#0ab934"/><rect x="358.54" y="532.60" width="133.40" height="58.90" fill="#0ab934"/><rect x="494.41" y="532.60" width="133.40" height="58.90" fill="#0ab934"/><rect x="630.28" y="532.60" width="133.40" height="58.90" fill="#0ab934"/><rect x="86.80" y="593.90" width="133.40" height="58.90" fill="#0ab934"/><rect x="222.67" y="593.90" width="133.40" height="58.90" fill="#0ab934"/><rect x="358.54" y="593.90" width="133.40" height="58.90" fill="#0ab934"/><rect x="494.41" y="593.90" width="133.40" height="58.90" fill="#0ab934"/><rect x="630.28" y="593.90" width="133.40" height="58.90" fill="#0ab934"/><rect x="86.80" y="655.20" width="133.40" height="58.90" fill="#0ab934"/><rect x="222.67" y="655.20" width="133.40" height="58.90" fill="#0ab934"/><rect x="358.54" y="655.20" width="133.40" height="58.90" fill="#0ab934"/><rect x="494.41" y="655.20" width="133.40" height="58.90" fill="#0ab934"/><rect x="630.28" y="655.20" width="133.40" height="58.90" fill="#0ab934"/><rect x="86.80" y="716.50" width="133.40" height="58.90" fill="#0ab934"/><rect x="222.67" y="716.50" width="133.40" height="58.90" fill="#0ab934"/><rect x="358.54" y="716.50" width="133.40" height="58.90" fill="#0ab934"/><rect x="494.41" y="716.50" width="133.40" height="58.90" fill="#0ab934"/><rect x="630.28" y="716.50" width="133.40" height="58.90" fill="#0ab934"/></svg>
<div class="a t" style="left:850.24px;top:270.30px;font-size:29px;line-height:29px;color:#ababad;font-weight:700;transform:rotate(90deg) scale(0.9521,0.9222)">Bambu Textured PEI Plate</div>
<svg class="a" style="left:770px;top:880px;" width="120" height="120" viewBox="0 0 120 120"><path d="M22.4 103 V27" stroke="#0cb00c" stroke-width="2.8"/><path d="M22.5 14.5 L18.8 28.5 H26.2 Z" fill="#10b810"/><path d="M22 102.7 H98" stroke="#dd0000" stroke-width="2.8"/><path d="M110.5 102.7 L97 99 V106.4 Z" fill="#cc0000"/><path d="M22.5 102.7 L12.5 112.5" stroke="#0c0cb0" stroke-width="3.4"/><circle cx="12.3" cy="112.8" r="3.7" fill="#0c0cb0"/></svg>
<svg class="a" style="left:806px;top:172px;" width="32" height="32" viewBox="0 0 32 32"><path d="M5.5 21.5 L20.5 6.5 Q23 4 25.5 6 Q27.5 8.5 25 11 L10 26 L5 26.5 Q4 26.5 4 25.5 Z" stroke="#09b33e" stroke-width="2.3" fill="none" stroke-linejoin="round"/><path d="M3.5 29.3 H28" stroke="#09b33e" stroke-width="2.6" stroke-linecap="round"/></svg>
<div class="a t" style="left:1551.20px;top:939.91px;font-size:34px;line-height:34px;color:#0aae42;font-weight:700;transform:scaleX(0.9168);">01</div>
<div class="a" style="left:1548px;top:245px;width:47px;height:47px;border:2px solid #9a9a9e;border-radius:5px;box-sizing:border-box"></div>
<div class="a" style="left:1548px;top:306px;width:47px;height:47px;border:2px solid #9a9a9e;border-radius:5px;box-sizing:border-box"></div>
<div class="a" style="left:1548px;top:367px;width:47px;height:47px;border:2px solid #9a9a9e;border-radius:5px;box-sizing:border-box"></div>
<div class="a" style="left:1548px;top:428px;width:47px;height:47px;border:2px solid #9a9a9e;border-radius:5px;box-sizing:border-box"></div>
<div class="a" style="left:1548px;top:489px;width:47px;height:47px;border:2px solid #9a9a9e;border-radius:5px;box-sizing:border-box"></div>
<svg class="a" style="left:1556px;top:253px;" width="31" height="31" viewBox="0 0 31 31"><path d="M3.5 3.5 L27.5 27.5 M27.5 3.5 L3.5 27.5" stroke="#9a9a9e" stroke-width="2.4"/></svg>
<svg class="a" style="left:1548px;top:306px;" width="47" height="47" viewBox="0 0 47 47"><text x="6.2" y="12.5" font-size="6.3" font-weight="700" fill="#9a9a9e" font-family="Liberation Sans" textLength="15.5" lengthAdjust="spacingAndGlyphs">AUTO</text><path d="M23 10.7 L41 16 L35.8 28.7 L18.6 23.8 Z" stroke="#9a9a9e" stroke-width="1.7" fill="none"/><path d="M15 20 L9 25.5" stroke="#9a9a9e" stroke-width="1.6"/><path d="M7 21.5 L8.5 29.5 L12.5 24.5 Z" stroke="#9a9a9e" stroke-width="1.4" fill="none"/><rect x="6.5" y="34.2" width="34.5" height="5.2" rx="2.6" stroke="#9a9a9e" stroke-width="1.7" fill="none"/></svg>
<svg class="a" style="left:1548px;top:367px;" width="47" height="47" viewBox="0 0 47 47"><rect x="7.8" y="7.4" width="32" height="9.9" stroke="#9a9a9e" stroke-width="1.8" fill="none"/><rect x="7.8" y="21.4" width="8.8" height="19.4" stroke="#9a9a9e" stroke-width="1.8" fill="none"/><rect x="20.5" y="21.4" width="19.3" height="6.8" stroke="#9a9a9e" stroke-width="1.8" fill="none"/><rect x="20.5" y="32.3" width="19.3" height="8.5" stroke="#9a9a9e" stroke-width="1.8" fill="none"/></svg>
<svg class="a" style="left:1548px;top:428px;" width="47" height="47" viewBox="0 0 47 47"><path d="M16.3 21 V14.5 Q16.3 8.5 22.8 8.5 Q29.3 8.5 29.3 14.5 V16.5" stroke="#9a9a9e" stroke-width="2.8" fill="none"/><rect x="12.7" y="20.6" width="21.7" height="17.2" rx="1.2" fill="#9a9a9e"/></svg>
<svg class="a" style="left:1548px;top:489px;" width="47" height="47" viewBox="0 0 47 47"><path d="M15.3 9.3 H31.7 L39.8 23.8 L31.7 38.3 H15.3 L7.3 23.8 Z" stroke="#9a9a9e" stroke-width="1.8" fill="none"/><circle cx="23.1" cy="23.8" r="6.3" stroke="#9a9a9e" stroke-width="1.8" fill="none"/></svg>
<div class="a" style="left:453px;top:1056px;width:62px;height:63px;background:#3e3e3f"></div>
<div class="a t" style="left:471.20px;top:1080.45px;font-size:14px;line-height:14px;color:#c8c8c8;font-weight:400;transform:scaleX(0.9627);">Top</div>
<svg class="a" style="left:440px;top:1030px;" width="100" height="100" viewBox="0 0 100 100"><path d="M11 91 V31" stroke="#587c5b" stroke-width="2.6"/><path d="M11 21 L5 32 H17 Z" fill="#5a805d"/><path d="M11 90.6 H70" stroke="#c98283" stroke-width="3.5"/><path d="M80.5 90.6 L69 84.5 V96.5 Z" fill="#c98283"/><path d="M11 84.5 L4.8 96 H17.2 Z" fill="#8080d8"/></svg>
<div class="a t" style="left:446.20px;top:1031.44px;font-size:12px;line-height:12px;color:#5c8260;font-weight:400;transform:scaleX(1.0833);">y</div>
<div class="a t" style="left:529.20px;top:1114.04px;font-size:12px;line-height:12px;color:#c98283;font-weight:400;transform:scaleX(1.0500);">x</div>
<div class="a" style="left:555.4px;top:1101.8px;width:36.8px;height:36.8px;background:#1d1d1f;border-radius:50%"></div>
<svg class="a" style="left:563px;top:1110px;" width="22" height="22" viewBox="0 0 22 22"><path d="M1 5.5 V3 Q1 1 3 1 H5.5 M16.5 1 H19 Q21 1 21 3 V5.5 M21 16.5 V19 Q21 21 19 21 H16.5 M5.5 21 H3 Q1 21 1 19 V16.5" stroke="#e4e4e4" stroke-width="1.6" fill="none"/><path d="M11 5 L16.5 8 V14 L11 17 L5.5 14 V8 Z M5.5 8 L11 11 L16.5 8 M11 11 V17" stroke="#e4e4e4" stroke-width="1.3" fill="none" stroke-linejoin="round"/></svg>
<div class="a" style="left:1528px;top:1068px;width:374px;height:73px;background:#2a2a2e;border-radius:4px;overflow:hidden"></div>
<div class="a" style="left:1528px;top:1068px;width:9px;height:73px;background:#0a9e35;border-radius:4px 0 0 4px"></div>
<div class="a t" style="left:1542.20px;top:1076.62px;font-size:12.5px;line-height:12.5px;color:#e4e4e4;font-weight:400;transform:scaleX(1.0354);">Object name: Cube</div>
<div class="a t" style="left:1542.20px;top:1091.52px;font-size:12.5px;line-height:12.5px;color:#e4e4e4;font-weight:400;transform:scaleX(1.0107);">Size: 45.55 x 20 x 1 mm</div>
<div class="a t" style="left:1542.20px;top:1106.62px;font-size:12.5px;line-height:12.5px;color:#e4e4e4;font-weight:400;transform:scaleX(1.0606);">Volume: 911 mm</div>
<div class="a t" style="left:1641.20px;top:1104.35px;font-size:7.5px;line-height:7.5px;color:#e4e4e4;font-weight:700;transform:scaleX(0.8408);">3</div>
<div class="a t" style="left:1542.20px;top:1121.22px;font-size:12.5px;line-height:12.5px;color:#e4e4e4;font-weight:400;transform:scaleX(1.0305);">Triangles: 12</div>
<div class="a" style="left:1869.5px;top:1073.4px;width:25.2px;height:25.2px;background:#3d3d42;border-radius:50%"></div>
<svg class="a" style="left:1874px;top:1078px;" width="16" height="16" viewBox="0 0 16 16"><path d="M1.5 1.5 L14.5 14.5 M14.5 1.5 L1.5 14.5" stroke="#b0b0b4" stroke-width="1.3"/></svg>
<div class="a" style="left:1881.5px;top:1122.5px;width:13px;height:13px;background:#36363b;border-radius:50%"></div>
<div class="a" style="left:1884.5px;top:1128.3px;width:7px;height:1.6px;background:#5a5a60"></div>
<div class="a t" style="left:1217.40px;top:21.15px;font-size:14px;line-height:14px;color:#76b900;font-weight:400;transform:scaleX(0.8006);">FPS</div>
<div class="a t" style="left:1249.50px;top:21.15px;font-size:14px;line-height:14px;color:#76b900;font-weight:700;transform:scaleX(1.0050);">N/A</div>
<div class="a t" style="left:1283.80px;top:21.15px;font-size:14px;line-height:14px;color:#76b900;font-weight:700;transform:scaleX(1.0133);">N/A</div>
<div class="a" style="left:1320px;top:16px;width:1.2px;height:19px;background:#76b900"></div>
<div class="a t" style="left:1335.10px;top:21.15px;font-size:14px;line-height:14px;color:#76b900;font-weight:400;transform:scaleX(0.9007);">GPU</div>
<div class="a t" style="left:1373.20px;top:21.15px;font-size:14px;line-height:14px;color:#76b900;font-weight:700;transform:scaleX(0.9009);">2</div>
<div class="a t" style="left:1384.20px;top:24.53px;font-size:10px;line-height:10px;color:#76b900;font-weight:700;transform:scaleX(1.0899);">%</div>
<div class="a t" style="left:1403.80px;top:21.15px;font-size:14px;line-height:14px;color:#76b900;font-weight:700;transform:scaleX(1.0360);">54</div>
<div class="a t" style="left:1423.20px;top:24.53px;font-size:10px;line-height:10px;color:#76b900;font-weight:400;transform:scaleX(1.0714);">°C</div>
<div class="a t" style="left:1441.90px;top:21.15px;font-size:14px;line-height:14px;color:#76b900;font-weight:700;transform:scaleX(1.0180);">847</div>
<div class="a t" style="left:1470.90px;top:24.53px;font-size:10px;line-height:10px;color:#76b900;font-weight:700;transform:scaleX(1.2214);">MHz</div>
<div class="a t" style="left:1502.00px;top:21.15px;font-size:14px;line-height:14px;color:#76b900;font-weight:700;transform:scaleX(1.0322);">0.865</div>
<div class="a t" style="left:1541.80px;top:24.53px;font-size:10px;line-height:10px;color:#76b900;font-weight:400;transform:scaleX(1.1880);">V</div>
<div class="a t" style="left:1557.70px;top:21.15px;font-size:14px;line-height:14px;color:#76b900;font-weight:700;transform:scaleX(0.9073);">27</div>
<div class="a t" style="left:1577.10px;top:24.53px;font-size:10px;line-height:10px;color:#76b900;font-weight:400;transform:scaleX(1.1323);">W</div>
<div class="a t" style="left:1594.10px;top:21.15px;font-size:14px;line-height:14px;color:#76b900;font-weight:700;transform:scaleX(1.0811);">0</div>
<div class="a t" style="left:1605.70px;top:24.53px;font-size:10px;line-height:10px;color:#76b900;font-weight:700;transform:scaleX(1.1712);">RPM</div>
<div class="a t" style="left:1638.20px;top:21.15px;font-size:14px;line-height:14px;color:#76b900;font-weight:700;transform:scaleX(1.0693);">405</div>
<div class="a t" style="left:1667.00px;top:24.53px;font-size:10px;line-height:10px;color:#76b900;font-weight:700;transform:scaleX(1.2360);">MHz</div>
<div class="a" style="left:1703.2px;top:16px;width:1.2px;height:19px;background:#76b900"></div>
<div class="a t" style="left:1717.90px;top:21.15px;font-size:14px;line-height:14px;color:#76b900;font-weight:400;transform:scaleX(0.9242);">CPU</div>
<div class="a t" style="left:1755.60px;top:21.15px;font-size:14px;line-height:14px;color:#76b900;font-weight:700;transform:scaleX(0.9781);">3</div>
<div class="a t" style="left:1766.90px;top:24.53px;font-size:10px;line-height:10px;color:#76b900;font-weight:700;transform:scaleX(1.1236);">%</div>
<div class="a" style="left:1790.8px;top:16px;width:1.2px;height:19px;background:#76b900"></div>
<div class="a t" style="left:1805.50px;top:21.15px;font-size:14px;line-height:14px;color:#76b900;font-weight:400;transform:scaleX(0.9213);">LAT</div>
<div class="a t" style="left:1837.20px;top:21.15px;font-size:14px;line-height:14px;color:#76b900;font-weight:700;transform:scaleX(0.9967);">N/A</div>
<div class="a t" style="left:1870.90px;top:21.15px;font-size:14px;line-height:14px;color:#76b900;font-weight:700;transform:scaleX(1.0257);">N/A</div>
</body></html>
